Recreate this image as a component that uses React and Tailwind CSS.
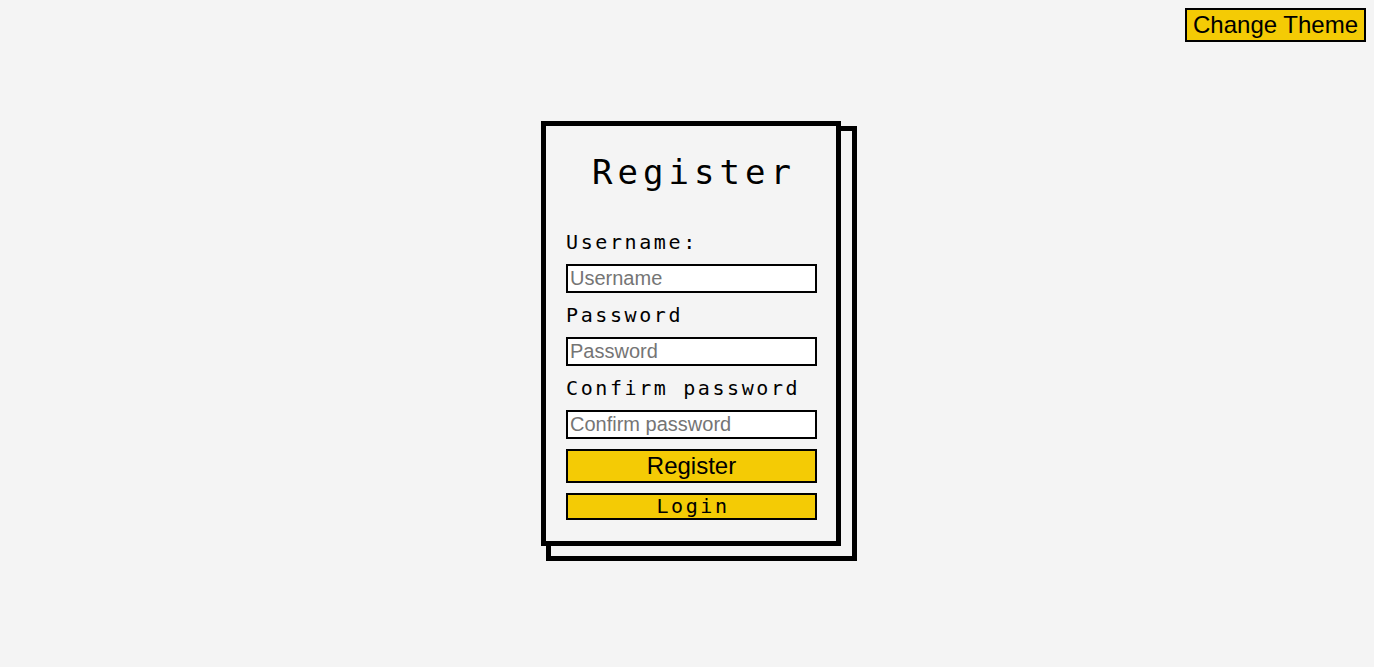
import { useState } from "react";

const mono = "font-['DejaVu_Sans_Mono',monospace]";
const sans = "font-['Liberation_Sans',Arial,sans-serif]";

function Field({ label, placeholder, type = "text" }) {
  return (
    <>
      <label className={`${mono} block text-[20px] leading-[44px] tracking-[2.6px] text-black`}>
        {label}
      </label>
      <input
        type={type}
        placeholder={placeholder}
        className={`${sans} block w-full border-2 border-black bg-white px-[2px] py-px text-[20px] leading-[23px] text-black outline-none placeholder:text-[#757575]`}
      />
    </>
  );
}

export default function App() {
  const [dark, setDark] = useState(false);

  return (
    <div className={`relative min-h-screen ${dark ? "bg-[#222]" : "bg-[#f4f4f4]"} flex items-center justify-center`}>
      {/* theme toggle */}
      <button
        onClick={() => setDark(!dark)}
        className={`${sans} absolute top-2 right-2 border-2 border-black bg-[#f4cb05] px-[6px] py-px text-[24px] leading-[28px] text-black`}
      >
        Change Theme
      </button>

      <div className="relative ml-2">
        {/* offset frame behind the card */}
        <div className="absolute left-[5px] top-[5px] h-[435px] w-[311px] border-[5px] border-black"></div>

        <form
          onSubmit={(e) => e.preventDefault()}
          className="relative w-[300px] border-[5px] border-black bg-[#f4f4f4] pl-[20px] pr-[19px] pt-[26px] pb-[21px]"
        >
          <h1 className={`${mono} mb-7 pl-[5px] text-center text-[34px] leading-[40px] tracking-[5px] text-black`}>
            Register
          </h1>

          <Field label="Username:" placeholder="Username" />
          <Field label="Password" placeholder="Password" type="password" />
          <Field label="Confirm password" placeholder="Confirm password" type="password" />

          <button
            type="submit"
            className={`${sans} mt-[10px] block w-full border-2 border-black bg-[#f4cb05] py-px text-[24px] leading-[28px] text-black`}
          >
            Register
          </button>
          <button
            type="button"
            className={`${mono} mt-[10px] block w-full border-2 border-black bg-[#f4cb05] pl-[3px] text-[20px] leading-[23px] tracking-[2.6px] text-black`}
          >
            Login
          </button>
        </form>
      </div>
    </div>
  );
}
